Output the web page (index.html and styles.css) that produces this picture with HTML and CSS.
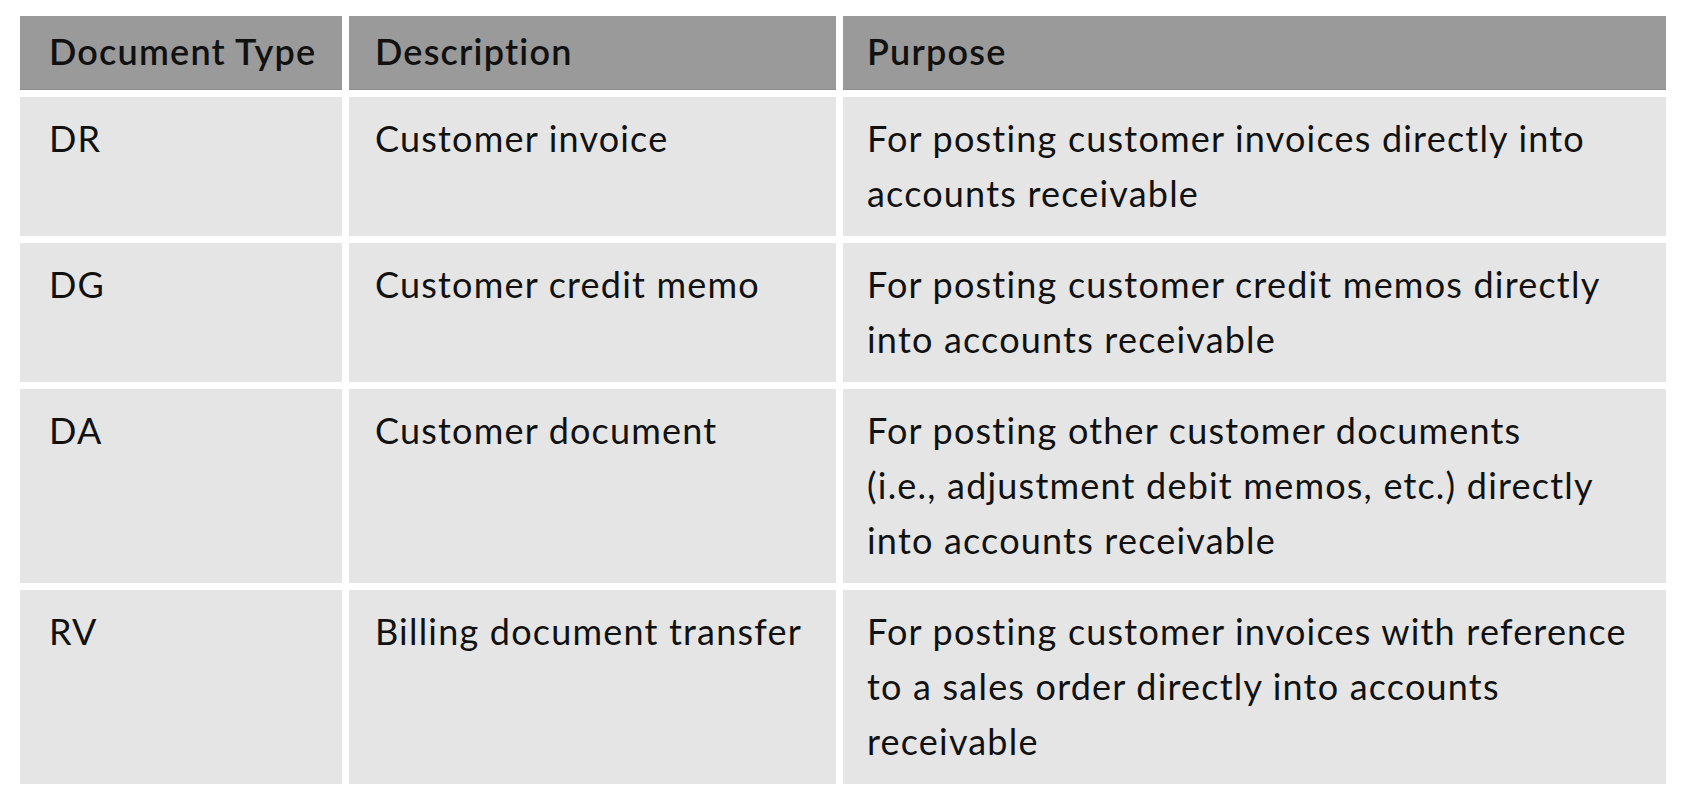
FILE: index.html
```html
<!DOCTYPE html>
<html lang="en">
<head>
<meta charset="utf-8">
<title>Document Types</title>
<link rel="stylesheet" href="styles.css">
</head>
<body>
<table class="doc-table">
  <thead>
    <tr>
      <th class="col-type">Document Type</th>
      <th class="col-desc">Description</th>
      <th class="col-purpose">Purpose</th>
    </tr>
  </thead>
  <tbody>
    <tr>
      <td class="col-type">DR</td>
      <td class="col-desc">Customer invoice</td>
      <td class="col-purpose">For posting customer invoices directly into accounts receivable</td>
    </tr>
    <tr>
      <td class="col-type">DG</td>
      <td class="col-desc">Customer credit memo</td>
      <td class="col-purpose">For posting customer credit memos directly into accounts receivable</td>
    </tr>
    <tr>
      <td class="col-type">DA</td>
      <td class="col-desc">Customer document</td>
      <td class="col-purpose">For posting other customer documents<br>(i.e., adjustment debit memos, etc.) directly into accounts receivable</td>
    </tr>
    <tr>
      <td class="col-type">RV</td>
      <td class="col-desc">Billing document transfer</td>
      <td class="col-purpose">For posting customer invoices with reference to a sales order directly into accounts receivable</td>
    </tr>
  </tbody>
</table>
</body>
</html>
```
FILE: styles.css
```css
html, body {
  margin: 0;
  padding: 0;
  background: #ffffff;
}

body {
  font-family: "Lato", "Open Sans", sans-serif;
  color: #111111;
}

.doc-table {
  margin: 9px 0 0 13px;
  width: 1660px;
  table-layout: fixed;
  border-collapse: separate;
  border-spacing: 7px;
}

.doc-table th,
.doc-table td {
  box-sizing: border-box;
  text-align: left;
  vertical-align: top;
  font-size: 36px;
  line-height: 55px;
  letter-spacing: 1.2px;
  padding-left: 26px;
  padding-right: 24px;
}

.doc-table th {
  background: #9a9a9a;
  font-weight: 600;
  padding-top: 8px;
  padding-bottom: 11px;
  box-shadow: inset 0 -1px 0 #8e8e8e;
}

.doc-table td {
  background: #e5e5e5;
  font-weight: 400;
  padding-top: 14px;
  padding-bottom: 15px;
}

.doc-table .col-type {
  width: 322px;
  padding-left: 29px;
}

.doc-table .col-desc {
  width: 487px;
}

.doc-table .col-purpose {
  width: 823px;
  padding-left: 24px;
}
```
